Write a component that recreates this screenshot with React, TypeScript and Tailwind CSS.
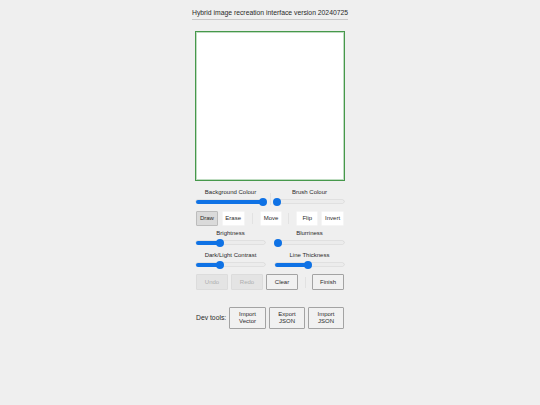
const Slider = ({ pct }: { pct: number }) => (
  <div className="relative w-[69px] h-[3px] rounded-full bg-[#ececec] shadow-[0_0_0_0.5px_#d2d2d2]">
    <div className="absolute left-0 top-[-0.5px] h-[4px] rounded-full bg-[#0f72e5]" style={{ width: `${pct}%` }} />
    <div
      className="absolute top-[-2.5px] w-[8px] h-[8px] -ml-[4px] rounded-full bg-[#0f72e5]"
      style={{ left: `${pct}%` }}
    />
  </div>
);

const SliderBlock = ({ label, pct }: { label: string; pct: number }) => (
  <div className="w-[69px] flex flex-col gap-[4px]">
    <div className="text-center text-[6px] leading-[8px] text-[#2a2a2a] whitespace-nowrap">{label}</div>
    <Slider pct={pct} />
  </div>
);

const Tool = ({ children, w, active }: { children: string; w: string; active?: boolean }) => (
  <div
    className={`h-[15px] flex items-center justify-center text-[6px] text-[#2a2a2a] rounded-[1px] border ${w} ${
      active ? "bg-[#dadada] border-[#bcbcbc]" : "bg-white border-[#f5f5f5]"
    }`}
  >
    {children}
  </div>
);

const Btn = ({ children, w, disabled }: { children: string; w: string; disabled?: boolean }) => (
  <div
    className={`h-[16px] flex items-center justify-center text-[6px] rounded-[1px] border ${w} ${
      disabled ? "bg-[#e4e4e4] border-[#dcdcdc] text-[#aeaeae]" : "bg-[#f1f1f1] border-[#a3a3a3] text-[#2a2a2a]"
    }`}
  >
    {children}
  </div>
);

const Dev = ({ a, b, w }: { a: string; b: string; w: string }) => (
  <div className={`h-[22px] flex flex-col items-center justify-center text-[6px] leading-[7.5px] text-[#2a2a2a] bg-[#f1f1f1] border border-[#a3a3a3] rounded-[1px] ${w}`}>
    <span>{a}</span>
    <span>{b}</span>
  </div>
);

const Sep = ({ h = "h-[11px]" }: { h?: string }) => <div className={`w-px bg-[#e2e2e2] ${h}`} />;

export default function App() {
  return (
    <div className="w-[540px] h-[405px] bg-[#efefef] flex flex-col items-center font-['Liberation_Sans',Arial,sans-serif]">
      <div className="w-[156px] mt-[8px] h-[12px] border-b border-[#c8c8c8] text-center text-[6.8px] leading-[9px] text-[#2a2a2a] whitespace-nowrap">
        Hybrid image recreation interface version 20240725
      </div>
      <div className="w-[150px] h-[150px] mt-[11px] bg-white border border-[#46984b] shadow-[inset_0_0_0_1px_#bfdcc1]" />
      <div className="w-[148px] mt-[7px] flex flex-col">
        <div className="flex justify-between h-[15px]">
          <SliderBlock label="Background Colour" pct={97} />
          <Sep h="h-[12px] mt-[5px]" />
          <SliderBlock label="Brush Colour" pct={3} />
        </div>
        <div className="flex items-center mt-[8px]">
          <Tool w="w-[22px]" active>Draw</Tool>
          <Tool w="w-[23px] ml-[4px]">Erase</Tool>
          <Sep h="h-[11px] ml-[7px]" />
          <Tool w="w-[23px] ml-[7px]">Move</Tool>
          <Sep h="h-[11px] ml-[6px]" />
          <Tool w="w-[22px] ml-[7px]">Flip</Tool>
          <Tool w="w-[23px] ml-[3px]">Invert</Tool>
        </div>
        <div className="flex justify-between mt-[3px]">
          <SliderBlock label="Brightness" pct={35} />
          <SliderBlock label="Blurriness" pct={4} />
        </div>
        <div className="flex justify-between mt-[7px]">
          <SliderBlock label="Dark/Light Contrast" pct={35} />
          <SliderBlock label="Line Thickness" pct={48} />
        </div>
        <div className="flex items-center mt-[8px]">
          <Btn w="w-[32px]" disabled>Undo</Btn>
          <Btn w="w-[32px] ml-[3px]" disabled>Redo</Btn>
          <Btn w="w-[32px] ml-[3px]">Clear</Btn>
          <Sep h="h-[11px] ml-[7px]" />
          <Btn w="w-[32px] ml-[6px]">Finish</Btn>
        </div>
        <div className="flex items-center mt-[17px]">
          <span className="text-[6.8px] text-[#2a2a2a] w-[33px] whitespace-nowrap">Dev tools:</span>
          <Dev a="Import" b="Vector" w="w-[37px]" />
          <Dev a="Export" b="JSON" w="w-[36px] ml-[3px]" />
          <Dev a="Import" b="JSON" w="w-[36px] ml-[3px]" />
        </div>
      </div>
    </div>
  );
}
